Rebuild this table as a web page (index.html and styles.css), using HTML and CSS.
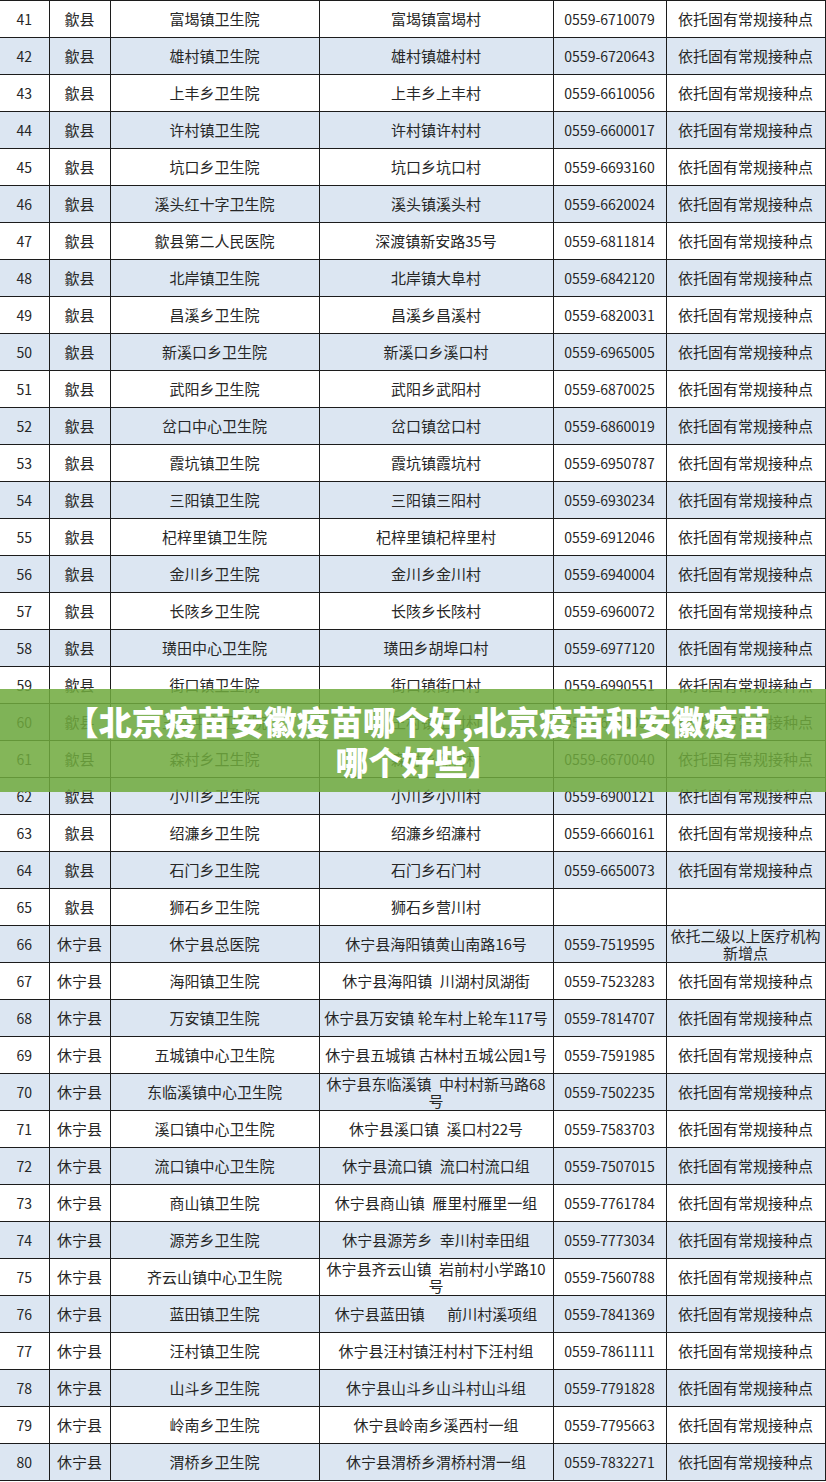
FILE: index.html
```html
<!DOCTYPE html>
<html lang="zh-CN">
<head>
<meta charset="utf-8">
<title>北京疫苗安徽疫苗哪个好</title>
<link rel="stylesheet" href="styles.css">
</head>
<body>
<div class="page">
<table class="sheet">
<colgroup><col class="c-no"><col class="c-county"><col class="c-hosp"><col class="c-addr"><col class="c-tel"><col class="c-note"></colgroup>
<tbody>
<tr><td class="no">41</td><td>歙县</td><td>富堨镇卫生院</td><td>富堨镇富堨村</td><td class="tel">0559-6710079</td><td>依托固有常规接种点</td></tr>
<tr class="alt"><td class="no">42</td><td>歙县</td><td>雄村镇卫生院</td><td>雄村镇雄村村</td><td class="tel">0559-6720643</td><td>依托固有常规接种点</td></tr>
<tr><td class="no">43</td><td>歙县</td><td>上丰乡卫生院</td><td>上丰乡上丰村</td><td class="tel">0559-6610056</td><td>依托固有常规接种点</td></tr>
<tr class="alt"><td class="no">44</td><td>歙县</td><td>许村镇卫生院</td><td>许村镇许村村</td><td class="tel">0559-6600017</td><td>依托固有常规接种点</td></tr>
<tr><td class="no">45</td><td>歙县</td><td>坑口乡卫生院</td><td>坑口乡坑口村</td><td class="tel">0559-6693160</td><td>依托固有常规接种点</td></tr>
<tr class="alt"><td class="no">46</td><td>歙县</td><td>溪头红十字卫生院</td><td>溪头镇溪头村</td><td class="tel">0559-6620024</td><td>依托固有常规接种点</td></tr>
<tr><td class="no">47</td><td>歙县</td><td>歙县第二人民医院</td><td>深渡镇新安路35号</td><td class="tel">0559-6811814</td><td>依托固有常规接种点</td></tr>
<tr class="alt"><td class="no">48</td><td>歙县</td><td>北岸镇卫生院</td><td>北岸镇大阜村</td><td class="tel">0559-6842120</td><td>依托固有常规接种点</td></tr>
<tr><td class="no">49</td><td>歙县</td><td>昌溪乡卫生院</td><td>昌溪乡昌溪村</td><td class="tel">0559-6820031</td><td>依托固有常规接种点</td></tr>
<tr class="alt"><td class="no">50</td><td>歙县</td><td>新溪口乡卫生院</td><td>新溪口乡溪口村</td><td class="tel">0559-6965005</td><td>依托固有常规接种点</td></tr>
<tr><td class="no">51</td><td>歙县</td><td>武阳乡卫生院</td><td>武阳乡武阳村</td><td class="tel">0559-6870025</td><td>依托固有常规接种点</td></tr>
<tr class="alt"><td class="no">52</td><td>歙县</td><td>岔口中心卫生院</td><td>岔口镇岔口村</td><td class="tel">0559-6860019</td><td>依托固有常规接种点</td></tr>
<tr><td class="no">53</td><td>歙县</td><td>霞坑镇卫生院</td><td>霞坑镇霞坑村</td><td class="tel">0559-6950787</td><td>依托固有常规接种点</td></tr>
<tr class="alt"><td class="no">54</td><td>歙县</td><td>三阳镇卫生院</td><td>三阳镇三阳村</td><td class="tel">0559-6930234</td><td>依托固有常规接种点</td></tr>
<tr><td class="no">55</td><td>歙县</td><td>杞梓里镇卫生院</td><td>杞梓里镇杞梓里村</td><td class="tel">0559-6912046</td><td>依托固有常规接种点</td></tr>
<tr class="alt"><td class="no">56</td><td>歙县</td><td>金川乡卫生院</td><td>金川乡金川村</td><td class="tel">0559-6940004</td><td>依托固有常规接种点</td></tr>
<tr><td class="no">57</td><td>歙县</td><td>长陔乡卫生院</td><td>长陔乡长陔村</td><td class="tel">0559-6960072</td><td>依托固有常规接种点</td></tr>
<tr class="alt"><td class="no">58</td><td>歙县</td><td>璜田中心卫生院</td><td>璜田乡胡埠口村</td><td class="tel">0559-6977120</td><td>依托固有常规接种点</td></tr>
<tr><td class="no">59</td><td>歙县</td><td>街口镇卫生院</td><td>街口镇街口村</td><td class="tel">0559-6990551</td><td>依托固有常规接种点</td></tr>
<tr class="alt"><td class="no">60</td><td>歙县</td><td>王村中心卫生院</td><td>王村镇王村村</td><td class="tel">0559-6950039</td><td>依托固有常规接种点</td></tr>
<tr><td class="no">61</td><td>歙县</td><td>森村乡卫生院</td><td>森村乡森村村</td><td class="tel">0559-6670040</td><td>依托固有常规接种点</td></tr>
<tr class="alt"><td class="no">62</td><td>歙县</td><td>小川乡卫生院</td><td>小川乡小川村</td><td class="tel">0559-6900121</td><td>依托固有常规接种点</td></tr>
<tr><td class="no">63</td><td>歙县</td><td>绍濂乡卫生院</td><td>绍濂乡绍濂村</td><td class="tel">0559-6660161</td><td>依托固有常规接种点</td></tr>
<tr class="alt"><td class="no">64</td><td>歙县</td><td>石门乡卫生院</td><td>石门乡石门村</td><td class="tel">0559-6650073</td><td>依托固有常规接种点</td></tr>
<tr><td class="no">65</td><td>歙县</td><td>狮石乡卫生院</td><td>狮石乡营川村</td><td class="tel"></td><td></td></tr>
<tr class="alt"><td class="no">66</td><td>休宁县</td><td>休宁县总医院</td><td>休宁县海阳镇黄山南路16号</td><td class="tel">0559-7519595</td><td class="two">依托二级以上医疗机构<br>新增点</td></tr>
<tr><td class="no">67</td><td>休宁县</td><td>海阳镇卫生院</td><td>休宁县海阳镇&ensp;川湖村凤湖街</td><td class="tel">0559-7523283</td><td>依托固有常规接种点</td></tr>
<tr class="alt"><td class="no">68</td><td>休宁县</td><td>万安镇卫生院</td><td>休宁县万安镇 轮车村上轮车117号</td><td class="tel">0559-7814707</td><td>依托固有常规接种点</td></tr>
<tr><td class="no">69</td><td>休宁县</td><td>五城镇中心卫生院</td><td>休宁县五城镇 古林村五城公园1号</td><td class="tel">0559-7591985</td><td>依托固有常规接种点</td></tr>
<tr class="alt"><td class="no">70</td><td>休宁县</td><td>东临溪镇中心卫生院</td><td class="two">休宁县东临溪镇&ensp;中村村新马路68<br>号</td><td class="tel">0559-7502235</td><td>依托固有常规接种点</td></tr>
<tr><td class="no">71</td><td>休宁县</td><td>溪口镇中心卫生院</td><td>休宁县溪口镇&ensp;溪口村22号</td><td class="tel">0559-7583703</td><td>依托固有常规接种点</td></tr>
<tr class="alt"><td class="no">72</td><td>休宁县</td><td>流口镇中心卫生院</td><td>休宁县流口镇&ensp;流口村流口组</td><td class="tel">0559-7507015</td><td>依托固有常规接种点</td></tr>
<tr><td class="no">73</td><td>休宁县</td><td>商山镇卫生院</td><td>休宁县商山镇&ensp;雁里村雁里一组</td><td class="tel">0559-7761784</td><td>依托固有常规接种点</td></tr>
<tr class="alt"><td class="no">74</td><td>休宁县</td><td>源芳乡卫生院</td><td>休宁县源芳乡&ensp;幸川村幸田组</td><td class="tel">0559-7773034</td><td>依托固有常规接种点</td></tr>
<tr><td class="no">75</td><td>休宁县</td><td>齐云山镇中心卫生院</td><td class="two">休宁县齐云山镇&ensp;岩前村小学路10<br>号</td><td class="tel">0559-7560788</td><td>依托固有常规接种点</td></tr>
<tr class="alt"><td class="no">76</td><td>休宁县</td><td>蓝田镇卫生院</td><td>休宁县蓝田镇&emsp;&ensp;前川村溪项组</td><td class="tel">0559-7841369</td><td>依托固有常规接种点</td></tr>
<tr><td class="no">77</td><td>休宁县</td><td>汪村镇卫生院</td><td>休宁县汪村镇汪村村下汪村组</td><td class="tel">0559-7861111</td><td>依托固有常规接种点</td></tr>
<tr class="alt"><td class="no">78</td><td>休宁县</td><td>山斗乡卫生院</td><td>休宁县山斗乡山斗村山斗组</td><td class="tel">0559-7791828</td><td>依托固有常规接种点</td></tr>
<tr><td class="no">79</td><td>休宁县</td><td>岭南乡卫生院</td><td>休宁县岭南乡溪西村一组</td><td class="tel">0559-7795663</td><td>依托固有常规接种点</td></tr>
<tr class="alt"><td class="no">80</td><td>休宁县</td><td>渭桥乡卫生院</td><td>休宁县渭桥乡渭桥村渭一组</td><td class="tel">0559-7832271</td><td>依托固有常规接种点</td></tr>
</tbody>
</table>
<div class="banner"><p class="banner-text">【北京疫苗安徽疫苗哪个好,北京疫苗和安徽疫苗<br>哪个好些】</p></div>
</div>
</body>
</html>
```

FILE: styles.css
```css
html, body {
  margin: 0;
  padding: 0;
  background: #ffffff;
}

.page {
  position: relative;
  width: 826px;
  height: 1482px;
  overflow: hidden;
}

.sheet {
  border-collapse: collapse;
  table-layout: fixed;
  width: 825px;
  font-family: "Noto Sans CJK SC", "Noto Sans", sans-serif;
  font-size: 15px;
  color: #262626;
}

.c-no { width: 49px; }
.c-county { width: 61px; }
.c-hosp { width: 209px; }
.c-addr { width: 234px; }
.c-tel { width: 113px; }
.c-note { width: 159px; }

.sheet tr {
  height: 37px;
}

.sheet tr.alt {
  background: #dce6f2;
}

.sheet td {
  border: 1px solid #1c1c1c;
  padding: 0 2px;
  text-align: center;
  vertical-align: middle;
  line-height: 18px;
  white-space: nowrap;
  overflow: hidden;
}

.sheet td:first-child {
  border-left: none;
}

.sheet td.two {
  line-height: 17px;
}

.sheet td.no {
  font-size: 14px;
}

.sheet td.tel {
  font-size: 14px;
}

.banner {
  position: absolute;
  left: 0;
  top: 689px;
  width: 826px;
  height: 103px;
  background: rgba(112, 170, 62, 0.86);
  display: flex;
  align-items: center;
  justify-content: center;
}

.banner-text {
  margin: 0;
  padding-left: 10px;
  text-align: center;
  white-space: nowrap;
  font-family: "Noto Sans CJK SC", "Noto Sans", sans-serif;
  font-weight: 900;
  font-size: 33px;
  line-height: 40px;
  color: #ffffff;
}
```
